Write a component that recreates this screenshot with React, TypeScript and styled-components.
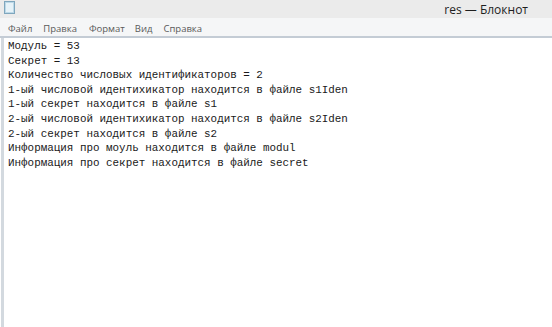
import React from 'react';
import styled, {createGlobalStyle} from 'styled-components';

const GlobalStyle = createGlobalStyle`
  html, body {
    margin: 0;
    padding: 0;
    background: #ffffff;
  }
  #root {
    width: 552px;
    height: 327px;
    overflow: hidden;
  }
`;

const Window = styled.div`
  width: 552px;
  height: 327px;
  display: flex;
  flex-direction: column;
  background: #ffffff;
`;

const TitleBar = styled.div`
  height: 18px;
  display: flex;
  align-items: center;
  justify-content: space-between;
  background: #ebebeb;
  padding: 0 24px 0 4px;
`;

const TitleText = styled.span`
  font-family: 'Open Sans', 'Noto Sans', sans-serif;
  font-size: 12px;
  color: #1e1e1e;
  line-height: 17px;
  margin-top: 1px;
`;

const MenuBar = styled.div`
  height: 18px;
  display: flex;
  align-items: center;
  padding-left: 8px;
  background: #f5f6f7;
  border-bottom: 2px solid #c4ccd5;
`;

const MenuItem = styled.span<{$gap: number}>`
  font-family: 'Open Sans', 'Noto Sans', sans-serif;
  font-size: 9.5px;
  color: #5a5a5a;
  margin-right: ${p => p.$gap}px;
  margin-top: 2px;
`;

const Editor = styled.div`
  flex: 1;
  display: flex;
  border-left: 3px solid #d3d9df;
  margin-left: 1px;
`;

const Text = styled.pre`
  margin: 0;
  padding: 1px 0 0 4px;
  font-family: 'Liberation Mono', 'DejaVu Sans Mono', monospace;
  font-size: 10.9px;
  line-height: 14.6px;
  color: #1a1a1a;
`;

const NotepadIcon = () => (
  <svg width="11" height="13" viewBox="0 0 11 13" style={{marginTop: -4}}>
    <rect x="0.5" y="0.5" width="10" height="12" fill="#bcd9e8" stroke="#7fa6bd" />
    <rect x="2" y="2" width="7" height="9" fill="#e6f2f8" />
  </svg>
);

const lines = [
  'Модуль = 53',
  'Секрет = 13',
  'Количество числовых идентификаторов = 2',
  '1-ый числовой идентихикатор находится в файле s1Iden',
  '1-ый секрет находится в файле s1',
  '2-ый числовой идентихикатор находится в файле s2Iden',
  '2-ый секрет находится в файле s2',
  'Информация про моуль находится в файле modul',
  'Информация про секрет находится в файле secret'
];

const menu: [string, number][] = [
  ['Файл', 11],
  ['Правка', 12],
  ['Формат', 10],
  ['Вид', 11],
  ['Справка', 0]
];

export default function App() {
  return (
    <>
      <GlobalStyle />
      <Window>
        <TitleBar>
          <NotepadIcon />
          <TitleText>res — Блокнот</TitleText>
        </TitleBar>
        <MenuBar>
          {menu.map(([label, gap]) => (
            <MenuItem key={label} $gap={gap}>
              {label}
            </MenuItem>
          ))}
        </MenuBar>
        <Editor>
          <Text>{lines.join('\n')}</Text>
        </Editor>
      </Window>
    </>
  );
}
